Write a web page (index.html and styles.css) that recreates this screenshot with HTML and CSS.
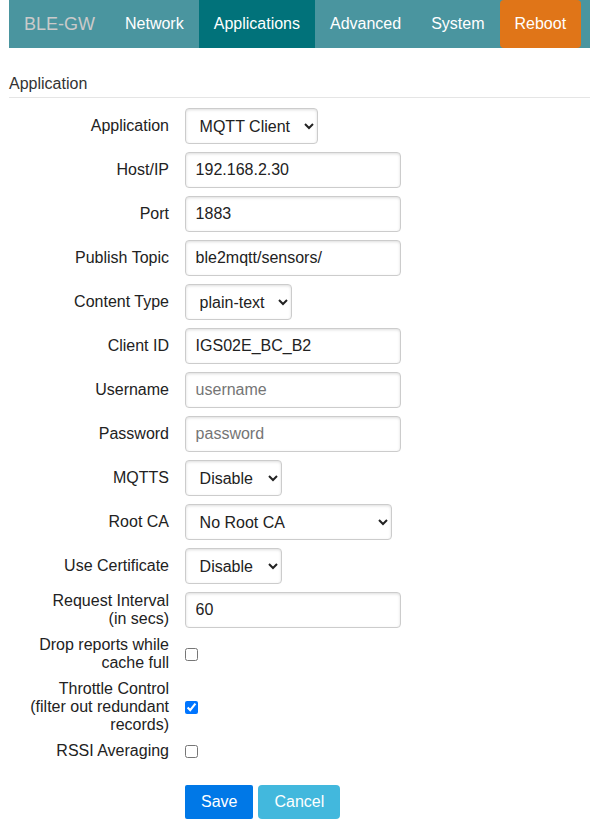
FILE: index.html
```html
<!DOCTYPE html>
<html lang="en">
<head>
<meta charset="utf-8">
<title>BLE-GW Applications</title>
<link rel="stylesheet" href="styles.css">
</head>
<body>
<div class="page">
  <nav class="navbar">
    <span class="brand">BLE-GW</span>
    <a class="nav-item">Network</a>
    <a class="nav-item active">Applications</a>
    <a class="nav-item">Advanced</a>
    <a class="nav-item">System</a>
    <a class="nav-item reboot">Reboot</a>
  </nav>

  <form class="form">
    <div class="legend">Application</div>

    <div class="group">
      <label class="lbl">Application</label>
      <select class="sel w-app"><option>MQTT Client</option></select>
    </div>
    <div class="group">
      <label class="lbl">Host/IP</label>
      <input class="txt" type="text" value="192.168.2.30">
    </div>
    <div class="group">
      <label class="lbl">Port</label>
      <input class="txt" type="text" value="1883">
    </div>
    <div class="group">
      <label class="lbl">Publish Topic</label>
      <input class="txt" type="text" value="ble2mqtt/sensors/">
    </div>
    <div class="group">
      <label class="lbl">Content Type</label>
      <select class="sel w-ct"><option>plain-text</option></select>
    </div>
    <div class="group">
      <label class="lbl">Client ID</label>
      <input class="txt" type="text" value="IGS02E_BC_B2">
    </div>
    <div class="group">
      <label class="lbl">Username</label>
      <input class="txt" type="text" placeholder="username">
    </div>
    <div class="group">
      <label class="lbl">Password</label>
      <input class="txt" type="password" placeholder="password">
    </div>
    <div class="group">
      <label class="lbl">MQTTS</label>
      <select class="sel w-dis"><option>Disable</option></select>
    </div>
    <div class="group">
      <label class="lbl">Root CA</label>
      <select class="sel w-ca"><option>No Root CA</option></select>
    </div>
    <div class="group">
      <label class="lbl">Use Certificate</label>
      <select class="sel w-dis"><option>Disable</option></select>
    </div>
    <div class="group">
      <label class="lbl">Request Interval<br>(in secs)</label>
      <input class="txt" type="text" value="60">
    </div>
    <div class="group">
      <label class="lbl">Drop reports while<br>cache full</label>
      <input class="chk" type="checkbox">
    </div>
    <div class="group">
      <label class="lbl">Throttle Control<br>(filter out redundant<br>records)</label>
      <input class="chk" type="checkbox" checked>
    </div>
    <div class="group">
      <label class="lbl">RSSI Averaging</label>
      <input class="chk" type="checkbox">
    </div>

    <div class="controls">
      <button type="button" class="btn btn-primary">Save</button>
      <button type="button" class="btn btn-secondary">Cancel</button>
    </div>
  </form>
</div>
</body>
</html>
```

FILE: styles.css
```css
html, body {
  margin: 0;
  padding: 0;
  background: #fff;
}

body {
  font-family: "Liberation Sans", Arial, sans-serif;
  font-size: 16px;
  color: #222;
}

.page {
  padding-left: 9px;
}

.navbar {
  display: flex;
  align-items: stretch;
  height: 48px;
  background: #4a959f;
}

.brand,
.nav-item {
  display: block;
  padding: 0 15px;
  line-height: 48px;
  color: #fff;
  text-decoration: none;
}

.brand {
  font-size: 18px;
  color: #cacaca;
}

.nav-item.active {
  background: #01727a;
}

.nav-item.reboot {
  background: #e07518;
  border-radius: 4px;
}

.form {
  margin: 22px 0 0 0;
}

.legend {
  padding: 5px 0 4px;
  line-height: 18px;
  color: #333;
  border-bottom: 1px solid #e5e5e5;
  margin-bottom: 10px;
}

.group {
  display: flex;
  align-items: center;
  margin-bottom: 8px;
}

.lbl {
  width: 160px;
  margin-right: 16px;
  text-align: right;
  line-height: 18px;
  color: #222;
  flex: none;
}

.txt,
.sel {
  box-sizing: border-box;
  height: 36px;
  border: 1px solid #ccc;
  border-radius: 4px;
  box-shadow: inset 0 1px 3px #ddd;
  font-family: "Liberation Sans", Arial, sans-serif;
  font-size: 16px;
  color: #222;
  background-color: #fff;
  margin: 0;
}

.txt {
  width: 216px;
  padding: 8px 9.6px;
}

.txt::placeholder {
  color: #757575;
}

.sel {
  padding: 0 5px 0 9.6px;
}

.w-app { width: 133px; }
.w-ct { width: 107px; }
.w-dis { width: 97px; }
.w-ca { width: 207px; }

.chk {
  width: 13px;
  height: 13px;
  margin: 0;
}

.controls {
  margin: 25px 0 0 176px;
  display: flex;
  gap: 5px;
}

.btn {
  font-family: "Liberation Sans", Arial, sans-serif;
  font-size: 16px;
  line-height: 18px;
  padding: 8px 16px;
  border: 0;
  border-radius: 2px;
  color: #fff;
}

.btn-primary {
  background: #0078e7;
}

.btn-secondary {
  background: #42b8dd;
  border-radius: 4px;
}
```
